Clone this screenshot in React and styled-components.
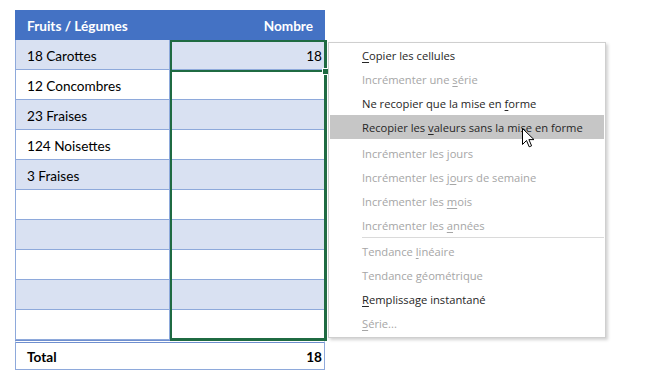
import React from 'react';
import styled, { createGlobalStyle } from 'styled-components';

const GlobalStyle = createGlobalStyle`
    html, body {
        margin: 0;
        padding: 0;
        background: #ffffff;
    }
`

const rows = [
    { name: '18 Carottes', value: '18' },
    { name: '12 Concombres', value: '' },
    { name: '23 Fraises', value: '' },
    { name: '124 Noisettes', value: '' },
    { name: '3 Fraises', value: '' },
    { name: '', value: '' },
    { name: '', value: '' },
    { name: '', value: '' },
    { name: '', value: '' },
    { name: '', value: '' },
];

const menuGroups = [
    [
        { pre: '', key: 'C', post: 'opier les cellules' },
        { pre: 'Incrémenter une ', key: 's', post: 'érie', disabled: true },
        { pre: 'Ne recopier que la mise en ', key: 'f', post: 'orme' },
        { pre: 'Recopier les ', key: 'v', post: 'aleurs sans la mise en forme', active: true },
    ],
    [
        { pre: 'Incrémenter les ', key: 'j', post: 'ours', disabled: true },
        { pre: 'Incrémenter les j', key: 'o', post: 'urs de semaine', disabled: true },
        { pre: 'Incrémenter les ', key: 'm', post: 'ois', disabled: true },
        { pre: 'Incrémenter les ', key: 'a', post: 'nnées', disabled: true },
    ],
    [
        { pre: 'Tendance ', key: 'l', post: 'inéaire', disabled: true },
        { pre: 'Tendance ', key: 'g', post: 'éométrique', disabled: true },
        { pre: '', key: 'R', post: 'emplissage instantané' },
        { pre: '', key: 'S', post: 'érie...', disabled: true },
    ],
];

const App = () => {
    return (
        <Page>
            <GlobalStyle />
            <Sheet>
                <HeaderCell>Fruits / Légumes</HeaderCell>
                <HeaderCell $right>Nombre</HeaderCell>
                {rows.map((row, i) => (
                    <React.Fragment key={i}>
                        <Cell $band={i % 2 === 0} $first>{row.name}</Cell>
                        <Cell $band={i % 2 === 0} $right>{row.value}</Cell>
                    </React.Fragment>
                ))}
                <TotalCell $first>Total</TotalCell>
                <TotalCell $right>18</TotalCell>
                <Selection>
                    <ActiveCell />
                    <FillHandle />
                </Selection>
            </Sheet>
            <Menu>
                {menuGroups.map((group, g) => (
                    <React.Fragment key={g}>
                        {g === 2 && <Separator />}
                        <Group $gap={g === 1}>
                            {group.map((item, i) => (
                                <MenuItem key={i} $disabled={item.disabled} $active={item.active}>
                                    {item.pre}<u>{item.key}</u>{item.post}
                                </MenuItem>
                            ))}
                        </Group>
                    </React.Fragment>
                ))}
                <Cursor width="13" height="21" viewBox="0 0 13 21">
                    <path d="M0.5 0.5 L0.5 16.5 L4.5 12.5 L7.2 18.8 L9.6 17.8 L6.9 11.6 L12 11.6 Z" fill="#ffffff" stroke="#000000" strokeWidth="1" strokeLinejoin="miter" />
                </Cursor>
            </Menu>
        </Page>
    );
};

export default App;

const Page = styled.div`
    display: flex;
    align-items: flex-start;
    padding: 10px 0 0 15px;
`

const Sheet = styled.div`
    position: relative;
    display: grid;
    grid-template-columns: 155px 155px;
    font-family: Lato, "Liberation Sans", sans-serif;
    font-size: 13.6px;
    color: #000000;
`

const HeaderCell = styled.div`
    height: 30px;
    box-sizing: border-box;
    background: #4472c4;
    color: #ffffff;
    font-weight: 700;
    display: flex;
    align-items: center;
    justify-content: ${p => p.$right ? 'flex-end' : 'flex-start'};
    padding: 2px 12px 0 12px;
`

const Cell = styled.div`
    height: 30px;
    box-sizing: border-box;
    background: ${p => p.$band ? '#d9e1f2' : '#ffffff'};
    border-bottom: 1px solid #8ea9db;
    border-right: 1px solid #8ea9db;
    border-left: ${p => p.$first ? '1px solid #8ea9db' : 'none'};
    display: flex;
    align-items: center;
    justify-content: ${p => p.$right ? 'flex-end' : 'flex-start'};
    padding: 3px 2px 0 11px;
`

const TotalCell = styled.div`
    height: 30px;
    box-sizing: border-box;
    background: #ffffff;
    font-weight: 700;
    border-top: 3px double #6f8fcf;
    border-bottom: 1px solid #8ea9db;
    border-right: ${p => p.$right ? '1px solid #8ea9db' : 'none'};
    border-left: ${p => p.$first ? '1px solid #8ea9db' : 'none'};
    display: flex;
    align-items: center;
    justify-content: ${p => p.$right ? 'flex-end' : 'flex-start'};
    padding: 1px 2px 0 11px;
`

const Selection = styled.div`
    position: absolute;
    left: 155px;
    top: 30px;
    width: 157px;
    height: 301px;
    box-sizing: border-box;
    border: 2px solid #1f6b42;
    border-right-width: 3px;
    border-bottom-width: 3px;
    pointer-events: none;
`

const ActiveCell = styled.div`
    position: absolute;
    left: 0;
    right: 0;
    top: 28px;
    height: 2px;
    background: #1f6b42;
`

const FillHandle = styled.div`
    position: absolute;
    right: -5px;
    top: 26px;
    width: 5px;
    height: 5px;
    background: #1f6b42;
    border: 1px solid #ffffff;
`

const Menu = styled.div`
    position: relative;
    margin: 32px 0 0 3px;
    width: 278px;
    box-sizing: border-box;
    padding: 0 1px 2px 1px;
    background: #ffffff;
    border: 1px solid #cfcfcf;
    box-shadow: 2px 2px 3px rgba(0, 0, 0, 0.18);
    font-family: "Open Sans", "Noto Sans", sans-serif;
    font-size: 11.2px;
`

const Group = styled.div`
    display: flex;
    flex-direction: column;
    margin-top: ${p => p.$gap ? '2px' : '0'};
`

const MenuItem = styled.div`
    height: 24px;
    display: flex;
    align-items: center;
    padding-left: 32px;
    white-space: pre;
    color: ${p => p.$disabled ? '#a6a6a6' : '#262626'};
    background: ${p => p.$active ? '#c6c6c6' : 'transparent'};
    u {
        text-underline-offset: 2px;
    }
`

const Separator = styled.div`
    height: 1px;
    margin: 0 0 1px 32px;
    background: #dadada;
`

const Cursor = styled.svg`
    position: absolute;
    left: 193px;
    top: 85px;
`
